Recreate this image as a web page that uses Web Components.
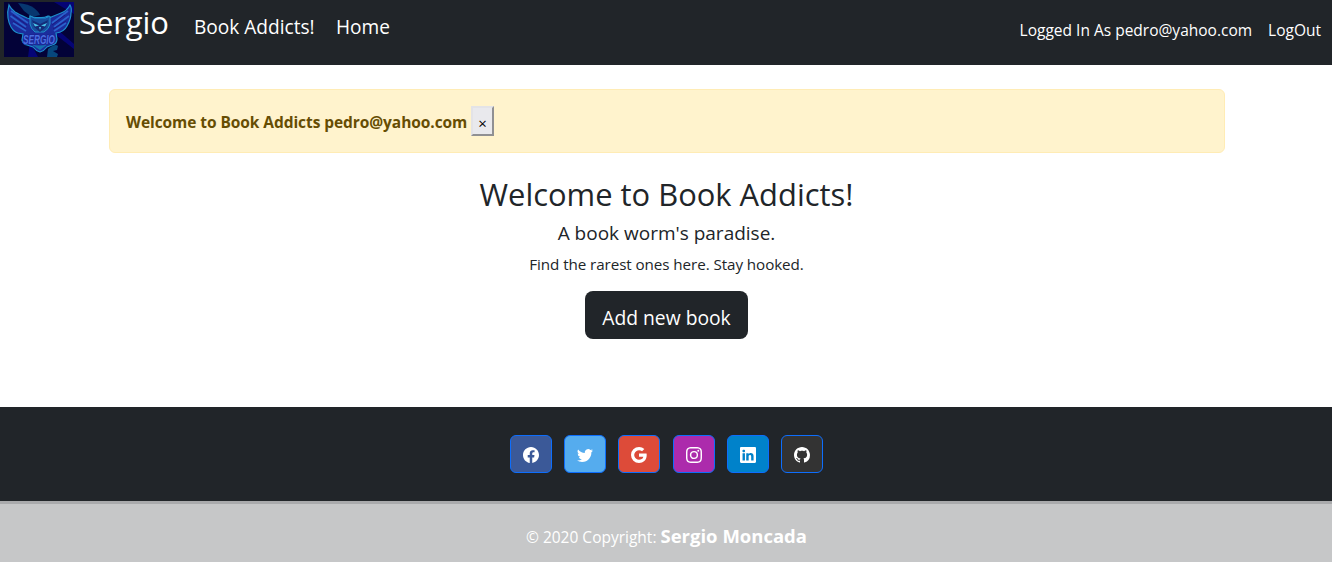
<!DOCTYPE html>
<html lang="en">
<head>
<meta charset="utf-8">
<title>Book Addicts!</title>
<style>
html,body{margin:0;height:100%}
body{font-family:"Open Sans","Noto Sans",sans-serif;font-size:15.2px;color:#212529;background:#fff;overflow:hidden}
</style>
</head>
<body>
<book-app></book-app>

<template id="t-app">
<style>
:host{display:flex;flex-direction:column;height:562px}
main{height:342px;padding:24px 107px 0 109px;box-sizing:border-box}
</style>
<site-nav></site-nav>
<main>
<flash-alert>Welcome to Book Addicts pedro@yahoo.com</flash-alert>
<welcome-hero></welcome-hero>
</main>
<site-footer></site-footer>
</template>

<template id="t-nav">
<style>
:host{display:flex;align-items:flex-start;height:65px;background:#212529;color:#fff;white-space:nowrap;box-sizing:border-box;padding:0 11px 0 4px}
owl-logo{margin:2px 5px 0 0}
.name{font-size:31px;line-height:45px;width:115px;letter-spacing:-.1px}
.nav{font-size:19.1px;line-height:55px}
.brand{width:142px}
.user{margin-left:auto;display:flex;gap:16px;line-height:60px;font-size:15.5px}
</style>
<owl-logo></owl-logo>
<span class="name">Sergio</span>
<span class="nav brand">Book Addicts!</span>
<span class="nav">Home</span>
<div class="user"><span class="who">Logged In As pedro@yahoo.com</span><span>LogOut</span></div>
</template>

<template id="t-owl">
<style>:host{display:block;width:70px;height:55px}svg{display:block}</style>
<svg width="70" height="55" viewBox="0 0 70 55">
<rect width="70" height="55" fill="#030238"/>
<path d="M14 1q11 1 16 5t6 7l-8 2-8-6z" fill="#07376f"/>
<path d="M50 0h20v12zM54 28l16 14v5L52 33zM26 40l8 15H24z" fill="#07068a" opacity=".75"/>
<path d="M44 47q7-6 10-3l-1 4-4 1 5 3-1 3H43z" fill="#07477d"/>
<path d="M5 3Q3 10 4 16q1 6 3 9 3 5 7 6l5 1-1 6q1 4 5 5l6 2q3 4 7 5 4-1 7-5l5-2q5-1 5-6l-1-6q8-1 11-7 4-7 4-13 1-5-1-8-3 6-9 8l-12 5-1 2V14q-4 2-9 1.500Q30 16 26 14v3l-3-1Q14 12 11 10 7 7 5 3z" fill="#1b2c9c" stroke="#1c8fcb" stroke-width="1.200"/>
<path d="M7 9l17 12M6.500 14L22 25M9 21l13 8M64 9L48 21M65 14L50 25M62 21l-12 8" stroke="#2a62cc" stroke-width="1.700"/>
<path d="M9 13l14 10M9 19l13 8M61 13L48 23M62 19l-13 8" stroke="#1b1a83" stroke-width="1"/>
<path d="M26 14q4 3 10 2 6 1 10-2l0 8q-1 5-6 8H31q-4-3-5-8z" fill="#174f9f" stroke="#2199cf" stroke-width=".900"/>
<path d="M28 18l8 4 8-4-2 7-6 5-6-5z" fill="#142c79"/>
<path d="M29 21l6 2.500-4 1zM43 21l-6 2.500 4 1zM35 25h2l-1 3z" fill="#48c4e9"/>
<path d="M27 42q8 3 17 0l-8 6z" fill="#1470ae"/>
<text x="19" y="41.500" textLength="32" lengthAdjust="spacingAndGlyphs" font-family="Liberation Sans,sans-serif" font-size="12.500" font-weight="bold" font-style="italic" fill="#4a72e2" stroke="#1b1f8c" stroke-width="1.200" paint-order="stroke">SERGIO</text>
</svg>
</template>

<template id="t-alert">
<style>
:host{display:flex;align-items:flex-start;box-sizing:border-box;height:64px;background:#fff3cd;border:1px solid #ffecb5;border-radius:6px;padding:16px;color:#664d03;white-space:nowrap}
strong{line-height:33px;font-weight:700;letter-spacing:-.07px;width:345px;font-size:15.5px}
button{box-sizing:border-box;width:23px;height:30px;margin:0;padding:3px 0 0;background:#e9e9ed;border:2px outset #e3e3e7;font:15px/20px "Open Sans",sans-serif;color:#000}
</style>
<strong><slot></slot></strong><button aria-label="Close">×</button>
</template>

<template id="t-hero">
<style>
:host{display:flex;flex-direction:column;align-items:center;white-space:nowrap;padding:22px 1px 0 0}
h2{font-size:30.9px;font-weight:400;line-height:38px;margin:0}
h5{font-size:19px;font-weight:400;line-height:24px;margin:8px 0 0}
p{margin:7px 0 0;line-height:24px;letter-spacing:-.07px}
a{margin-top:15px;width:163px;height:48px;box-sizing:border-box;border-radius:8px;background:#212529;color:#fff;font-size:19.3px;line-height:53px;text-align:center}
</style>
<h2>Welcome to Book Addicts!</h2>
<h5>A book worm's paradise.</h5>
<p>Find the rarest ones here. Stay hooked.</p>
<a>Add new book</a>
</template>

<template id="t-social">
<style>
:host{display:flex;align-items:center;justify-content:center;box-sizing:border-box;width:42px;height:38px;border:1px solid #0d6efd;border-radius:6px;color:#fff;padding-top:2px}
svg{width:16px;height:16px;fill:currentColor}
</style>
<svg viewBox="0 0 16 16"><path/></svg>
</template>

<template id="t-footer">
<style>
:host{display:block;flex:1;text-align:center;color:#fff;white-space:nowrap}
.icons{height:94px;box-sizing:border-box;background:#212529;display:flex;justify-content:center;gap:12.25px;padding:28px 0 0 .8px}
.copy{height:61px;box-sizing:border-box;background:#c6c7c8;border-top:3px solid #a9aaac;line-height:64px;padding-left:1px}
.copy span{font-size:15.5px}
b{font-size:18.5px}
</style>
<div class="icons">
<social-link name="facebook" style="background:#3b5998"></social-link>
<social-link name="twitter" style="background:#55acee"></social-link>
<social-link name="google" style="background:#dd4b39"></social-link>
<social-link name="instagram" style="background:#ac2bac"></social-link>
<social-link name="linkedin" style="background:#0082ca"></social-link>
<social-link name="github" style="background:#333333"></social-link>
</div>
<div class="copy"><span>© 2020 Copyright: </span><b>Sergio Moncada</b></div>
</template>

<script>
const define=(tag,id)=>customElements.define(tag,class extends HTMLElement{
  constructor(){super();this.attachShadow({mode:'open'}).append(document.getElementById(id).content.cloneNode(true));}
});
const glyphs={
facebook:'M16 8.049c0-4.446-3.582-8.05-8-8.05C3.580 0-.002 3.603-.002 8.050c0 4.017 2.926 7.347 6.750 7.951v-5.625h-2.030V8.050H6.750V6.275c0-2.017 1.195-3.131 3.022-3.131.876 0 1.791.157 1.791.157v1.980h-1.009c-.993 0-1.303.621-1.303 1.258v1.510h2.218l-.354 2.326H9.250V16c3.824-.604 6.750-3.934 6.750-7.951z',
twitter:'M5.026 15c6.038 0 9.341-5.003 9.341-9.334 0-.140 0-.282-.006-.422A6.685 6.685 0 0 0 16 3.542a6.658 6.658 0 0 1-1.889.518 3.301 3.301 0 0 0 1.447-1.817 6.533 6.533 0 0 1-2.087.793A3.286 3.286 0 0 0 7.875 6.030a9.325 9.325 0 0 1-6.767-3.429 3.289 3.289 0 0 0 1.018 4.382A3.323 3.323 0 0 1 .640 6.575v.045a3.288 3.288 0 0 0 2.632 3.218 3.203 3.203 0 0 1-.865.115 3.230 3.230 0 0 1-.614-.057 3.283 3.283 0 0 0 3.067 2.277A6.588 6.588 0 0 1 .780 13.580a6.320 6.320 0 0 1-.780-.045A9.344 9.344 0 0 0 5.026 15z',
google:'M15.545 6.558a9.420 9.420 0 0 1 .139 1.626c0 2.434-.870 4.492-2.384 5.885h.002C11.978 15.292 10.158 16 8 16A8 8 0 1 1 8 0a7.689 7.689 0 0 1 5.352 2.082l-2.284 2.284A4.347 4.347 0 0 0 8 3.166c-2.087 0-3.860 1.408-4.492 3.304a4.792 4.792 0 0 0 0 3.063h.003c.635 1.893 2.405 3.301 4.492 3.301 1.078 0 2.004-.276 2.722-.764h-.003a3.702 3.702 0 0 0 1.599-2.431H8v-3.080h7.545z',
instagram:'M8 0C5.829 0 5.556.010 4.703.048 3.850.088 3.269.222 2.760.420a3.917 3.917 0 0 0-1.417.923A3.927 3.927 0 0 0 .420 2.760C.222 3.268.087 3.850.048 4.700.010 5.555 0 5.827 0 8.001c0 2.172.010 2.444.048 3.297.040.852.174 1.433.372 1.942.205.526.478.972.923 1.417.444.445.890.719 1.416.923.510.198 1.090.333 1.942.372C5.555 15.990 5.827 16 8 16s2.444-.010 3.298-.048c.851-.040 1.434-.174 1.943-.372a3.916 3.916 0 0 0 1.416-.923c.445-.445.718-.891.923-1.417.197-.509.332-1.090.372-1.942C15.990 10.445 16 10.173 16 8s-.010-2.445-.048-3.299c-.040-.851-.175-1.433-.372-1.941a3.926 3.926 0 0 0-.923-1.417A3.911 3.911 0 0 0 13.240.420c-.510-.198-1.092-.333-1.943-.372C10.443.010 10.172 0 7.998 0H8zM7.282 1.442h.718c2.136 0 2.389.007 3.232.046.780.035 1.204.166 1.486.275.373.145.640.319.920.599.280.280.453.546.598.920.110.281.240.705.275 1.485.039.843.047 1.096.047 3.231s-.008 2.389-.047 3.232c-.035.780-.166 1.203-.275 1.485a2.470 2.470 0 0 1-.599.919c-.280.280-.546.453-.920.598-.280.110-.704.240-1.485.276-.843.038-1.096.047-3.232.047s-2.390-.009-3.233-.047c-.780-.036-1.203-.166-1.485-.276a2.478 2.478 0 0 1-.920-.598 2.480 2.480 0 0 1-.600-.920c-.109-.281-.240-.705-.275-1.485-.038-.843-.046-1.096-.046-3.233 0-2.136.008-2.388.046-3.231.036-.780.166-1.204.276-1.486.145-.373.319-.640.599-.920.280-.280.546-.453.920-.598.282-.110.705-.240 1.485-.276.738-.034 1.024-.044 2.515-.045v.002zm4.988 1.328a.960.960 0 1 0 0 1.920.960.960 0 0 0 0-1.920zM8 3.892a4.109 4.109 0 1 0 0 8.217 4.109 4.109 0 0 0 0-8.217zm0 1.441a2.667 2.667 0 1 1 0 5.334 2.667 2.667 0 0 1 0-5.334z',
linkedin:'M0 1.146C0 .513.526 0 1.175 0h13.650C15.474 0 16 .513 16 1.146v13.708c0 .633-.526 1.146-1.175 1.146H1.175C.526 16 0 15.487 0 14.854V1.146zm4.943 12.248V6.169H2.542v7.225h2.401zm-1.200-8.212c.837 0 1.358-.554 1.358-1.248-.015-.709-.520-1.248-1.342-1.248-.822 0-1.359.540-1.359 1.248 0 .694.521 1.248 1.327 1.248h.016zm4.908 8.212V9.359c0-.216.016-.432.080-.586.173-.431.568-.878 1.232-.878.869 0 1.216.662 1.216 1.634v3.865h2.401V9.250c0-2.220-1.184-3.252-2.764-3.252-1.274 0-1.845.700-2.165 1.193v.025h-.016l.016-.025V6.169h-2.400c.030.678 0 7.225 0 7.225h2.400z',
github:'M8 0C3.580 0 0 3.580 0 8c0 3.540 2.290 6.530 5.470 7.590.400.070.550-.170.550-.380 0-.190-.010-.820-.010-1.490-2.010.370-2.530-.490-2.690-.940-.090-.230-.480-.940-.820-1.130-.280-.150-.680-.520-.010-.530.630-.010 1.080.580 1.230.820.720 1.210 1.870.870 2.330.660.070-.520.280-.870.510-1.070-1.780-.200-3.640-.890-3.640-3.950 0-.870.310-1.590.820-2.150-.080-.200-.360-1.020.080-2.120 0 0 .670-.210 2.200.820.640-.180 1.320-.270 2-.270.680 0 1.360.090 2 .270 1.530-1.040 2.200-.820 2.200-.820.440 1.100.160 1.920.080 2.120.510.560.820 1.270.820 2.150 0 3.070-1.870 3.750-3.650 3.950.290.250.540.730.540 1.480 0 1.070-.010 1.930-.010 2.200 0 .210.150.460.550.380A8.012 8.012 0 0 0 16 8c0-4.420-3.580-8-8-8z'
};
customElements.define('social-link',class extends HTMLElement{
  connectedCallback(){
    const root=this.attachShadow({mode:'open'});
    root.append(document.getElementById('t-social').content.cloneNode(true));
    root.querySelector('path').setAttribute('d',glyphs[this.getAttribute('name')]);
  }
});
define('owl-logo','t-owl');
define('site-nav','t-nav');
define('flash-alert','t-alert');
define('welcome-hero','t-hero');
define('site-footer','t-footer');
define('book-app','t-app');
</script>
</body>
</html>
